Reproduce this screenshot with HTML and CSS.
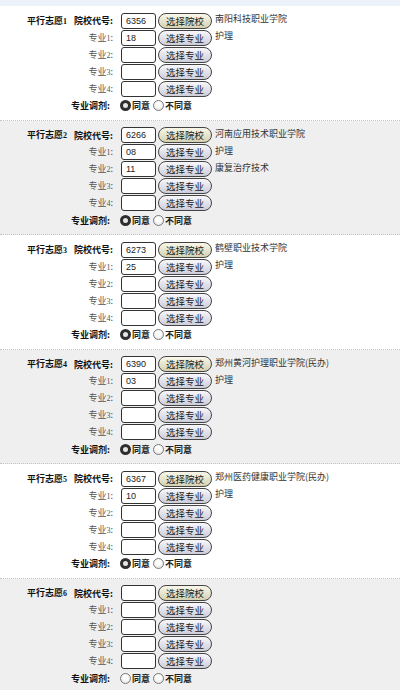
FILE: index.html
```html
<!DOCTYPE html>
<html>
<head>
  <title>平行志愿</title>
  <link rel="stylesheet" href="styles.css">
</head>
<body>
  <div class="topbar"></div>

  <div class="wish">
    <div class="row">
      <span class="title">平行志愿<em>1</em></span>
      <span class="label label-strong">院校代号:</span>
      <input class="code" value="6356">
      <button class="btn btn-school">选择院校</button>
      <span class="name">南阳科技职业学院</span>
    </div>
    <div class="row">
      <span class="label">专业<em>1</em>:</span>
      <input class="code" value="18">
      <button class="btn">选择专业</button>
      <span class="name">护理</span>
    </div>
    <div class="row">
      <span class="label">专业<em>2</em>:</span>
      <input class="code">
      <button class="btn">选择专业</button>
    </div>
    <div class="row">
      <span class="label">专业<em>3</em>:</span>
      <input class="code">
      <button class="btn">选择专业</button>
    </div>
    <div class="row">
      <span class="label">专业<em>4</em>:</span>
      <input class="code">
      <button class="btn">选择专业</button>
    </div>
    <div class="row">
      <span class="label label-strong adjust-label">专业调剂:</span>
      <div class="choices">
        <label class="choice"><input type="radio" class="radio" name="adj1" checked>同意</label>
        <label class="choice"><input type="radio" class="radio" name="adj1">不同意</label>
      </div>
    </div>
  </div>

  <div class="wish wish-alt">
    <div class="row">
      <span class="title">平行志愿<em>2</em></span>
      <span class="label label-strong">院校代号:</span>
      <input class="code" value="6266">
      <button class="btn btn-school">选择院校</button>
      <span class="name">河南应用技术职业学院</span>
    </div>
    <div class="row">
      <span class="label">专业<em>1</em>:</span>
      <input class="code" value="08">
      <button class="btn">选择专业</button>
      <span class="name">护理</span>
    </div>
    <div class="row">
      <span class="label">专业<em>2</em>:</span>
      <input class="code" value="11">
      <button class="btn">选择专业</button>
      <span class="name">康复治疗技术</span>
    </div>
    <div class="row">
      <span class="label">专业<em>3</em>:</span>
      <input class="code">
      <button class="btn">选择专业</button>
    </div>
    <div class="row">
      <span class="label">专业<em>4</em>:</span>
      <input class="code">
      <button class="btn">选择专业</button>
    </div>
    <div class="row">
      <span class="label label-strong adjust-label">专业调剂:</span>
      <div class="choices">
        <label class="choice"><input type="radio" class="radio" name="adj2" checked>同意</label>
        <label class="choice"><input type="radio" class="radio" name="adj2">不同意</label>
      </div>
    </div>
  </div>

  <div class="wish">
    <div class="row">
      <span class="title">平行志愿<em>3</em></span>
      <span class="label label-strong">院校代号:</span>
      <input class="code" value="6273">
      <button class="btn btn-school">选择院校</button>
      <span class="name">鹤壁职业技术学院</span>
    </div>
    <div class="row">
      <span class="label">专业<em>1</em>:</span>
      <input class="code" value="25">
      <button class="btn">选择专业</button>
      <span class="name">护理</span>
    </div>
    <div class="row">
      <span class="label">专业<em>2</em>:</span>
      <input class="code">
      <button class="btn">选择专业</button>
    </div>
    <div class="row">
      <span class="label">专业<em>3</em>:</span>
      <input class="code">
      <button class="btn">选择专业</button>
    </div>
    <div class="row">
      <span class="label">专业<em>4</em>:</span>
      <input class="code">
      <button class="btn">选择专业</button>
    </div>
    <div class="row">
      <span class="label label-strong adjust-label">专业调剂:</span>
      <div class="choices">
        <label class="choice"><input type="radio" class="radio" name="adj3" checked>同意</label>
        <label class="choice"><input type="radio" class="radio" name="adj3">不同意</label>
      </div>
    </div>
  </div>

  <div class="wish wish-alt">
    <div class="row">
      <span class="title">平行志愿<em>4</em></span>
      <span class="label label-strong">院校代号:</span>
      <input class="code" value="6390">
      <button class="btn btn-school">选择院校</button>
      <span class="name">郑州黄河护理职业学院(民办)</span>
    </div>
    <div class="row">
      <span class="label">专业<em>1</em>:</span>
      <input class="code" value="03">
      <button class="btn">选择专业</button>
      <span class="name">护理</span>
    </div>
    <div class="row">
      <span class="label">专业<em>2</em>:</span>
      <input class="code">
      <button class="btn">选择专业</button>
    </div>
    <div class="row">
      <span class="label">专业<em>3</em>:</span>
      <input class="code">
      <button class="btn">选择专业</button>
    </div>
    <div class="row">
      <span class="label">专业<em>4</em>:</span>
      <input class="code">
      <button class="btn">选择专业</button>
    </div>
    <div class="row">
      <span class="label label-strong adjust-label">专业调剂:</span>
      <div class="choices">
        <label class="choice"><input type="radio" class="radio" name="adj4" checked>同意</label>
        <label class="choice"><input type="radio" class="radio" name="adj4">不同意</label>
      </div>
    </div>
  </div>

  <div class="wish">
    <div class="row">
      <span class="title">平行志愿<em>5</em></span>
      <span class="label label-strong">院校代号:</span>
      <input class="code" value="6367">
      <button class="btn btn-school">选择院校</button>
      <span class="name">郑州医药健康职业学院(民办)</span>
    </div>
    <div class="row">
      <span class="label">专业<em>1</em>:</span>
      <input class="code" value="10">
      <button class="btn">选择专业</button>
      <span class="name">护理</span>
    </div>
    <div class="row">
      <span class="label">专业<em>2</em>:</span>
      <input class="code">
      <button class="btn">选择专业</button>
    </div>
    <div class="row">
      <span class="label">专业<em>3</em>:</span>
      <input class="code">
      <button class="btn">选择专业</button>
    </div>
    <div class="row">
      <span class="label">专业<em>4</em>:</span>
      <input class="code">
      <button class="btn">选择专业</button>
    </div>
    <div class="row">
      <span class="label label-strong adjust-label">专业调剂:</span>
      <div class="choices">
        <label class="choice"><input type="radio" class="radio" name="adj5" checked>同意</label>
        <label class="choice"><input type="radio" class="radio" name="adj5">不同意</label>
      </div>
    </div>
  </div>

  <div class="wish wish-alt">
    <div class="row">
      <span class="title">平行志愿<em>6</em></span>
      <span class="label label-strong">院校代号:</span>
      <input class="code">
      <button class="btn btn-school">选择院校</button>
    </div>
    <div class="row">
      <span class="label">专业<em>1</em>:</span>
      <input class="code">
      <button class="btn">选择专业</button>
    </div>
    <div class="row">
      <span class="label">专业<em>2</em>:</span>
      <input class="code">
      <button class="btn">选择专业</button>
    </div>
    <div class="row">
      <span class="label">专业<em>3</em>:</span>
      <input class="code">
      <button class="btn">选择专业</button>
    </div>
    <div class="row">
      <span class="label">专业<em>4</em>:</span>
      <input class="code">
      <button class="btn">选择专业</button>
    </div>
    <div class="row">
      <span class="label label-strong adjust-label">专业调剂:</span>
      <div class="choices">
        <label class="choice"><input type="radio" class="radio" name="adj6">同意</label>
        <label class="choice"><input type="radio" class="radio" name="adj6">不同意</label>
      </div>
    </div>
  </div>
</body>
</html>
```

FILE: styles.css
```css
/* Base */
* {
  margin: 0;
  padding: 0;
  box-sizing: border-box;
}

body {
  width: 400px;
  background-color: #ffffff;
  color: #222222;
  font-family: "Noto Sans CJK SC", "Liberation Sans", sans-serif;
  font-size: 9px;
  line-height: 1;
}

.topbar {
  height: 6px;
  background-color: #edf2fa;
}

/* One block per 志愿 */
.wish {
  padding: 6px 0 5.6px 27px;
  border-bottom: 1px dotted #c4c4c4;
}

.wish-alt {
  background-color: #efefef;
}

.row {
  display: grid;
  grid-template-columns: 45px 49px 37px 57px 1fr;
  align-items: center;
  height: 17px;
}

.title {
  grid-column: 1;
  font-weight: 700;
  color: #111111;
}

.title em,
.label em {
  font-style: normal;
  font-family: "Liberation Serif", serif;
  font-size: 8px;
}

.label {
  grid-column: 2;
  text-align: right;
  padding-right: 8px;
  color: #555555;
  white-space: nowrap;
}

.label-strong {
  font-weight: 700;
  color: #111111;
}

.adjust-label {
  grid-column: 1 / 3;
  padding-right: 11px;
}

.code {
  grid-column: 3;
  width: 35px;
  height: 16px;
  padding: 0 0 0 4px;
  border: 1px solid #333333;
  border-radius: 3px;
  background-color: #ffffff;
  font-family: "Liberation Sans", sans-serif;
  font-size: 9px;
  color: #222222;
  outline: none;
}

.btn {
  grid-column: 4;
  width: 54px;
  height: 16px;
  border: 1px solid #444444;
  border-radius: 8px;
  background: linear-gradient(#f7f7fb, #cdcedb);
  font-family: "Noto Sans CJK SC", sans-serif;
  font-size: 9.5px;
  color: #1a1a1a;
  cursor: pointer;
}

.btn-school {
  background: linear-gradient(#f8f7ea, #d4d2b3);
}

.name {
  grid-column: 5;
  color: #333333;
  white-space: nowrap;
  align-self: start;
  padding-top: 2px;
}

/* 专业调剂 radios */
.choices {
  grid-column: 3 / 6;
  display: flex;
  align-items: center;
  gap: 3px;
  margin-left: -1px;
}

.choice {
  display: flex;
  align-items: center;
  font-weight: 700;
  color: #222222;
}

.radio {
  appearance: none;
  width: 11px;
  height: 11px;
  margin-right: 1px;
  border: 1px solid #7a7a7a;
  border-radius: 50%;
  background: radial-gradient(circle at 50% 40%, #ffffff 30%, #d8d8d8);
}

.radio:checked {
  border: 3px solid #2e2e2e;
  background: #e6e6e6;
}
```
